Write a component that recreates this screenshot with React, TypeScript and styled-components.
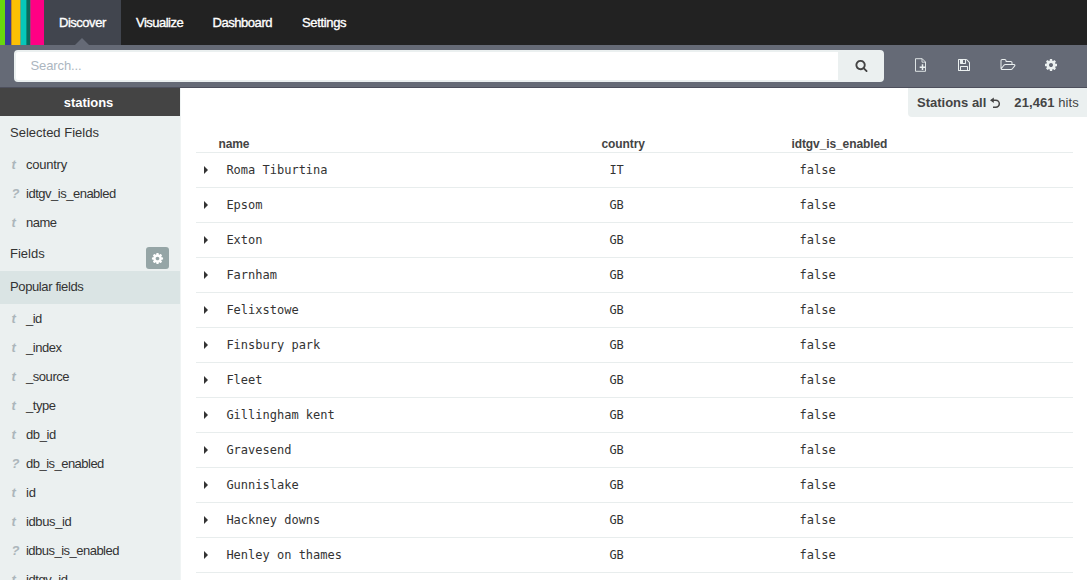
import React from "react";
import styled, { createGlobalStyle } from "styled-components";

const Global = createGlobalStyle`
  * { box-sizing: border-box; }
  html, body { margin: 0; height: 100%; overflow: hidden; }
  body { font-family: "Liberation Sans", Arial, sans-serif; font-size: 13px; color: #333; background: #fff; }
`;

const Page = styled.div`
  height: 580px;
  display: flex;
  flex-direction: column;
  overflow: hidden;
`;

const Navbar = styled.nav`
  height: 45px;
  flex: none;
  display: flex;
  background: #222;
`;

const Logo = styled.div`
  width: 44px;
  display: flex;
`;

const Stripe = styled.span<{ $w: number; $c: string }>`
  width: ${(p) => p.$w}px;
  background: ${(p) => p.$c};
`;

const Tab = styled.a<{ $active?: boolean; $w: number; $track: number }>`
  position: relative;
  width: ${(p) => p.$w}px;
  padding-left: 15px;
  line-height: 45px;
  font-size: 13px;
  white-space: nowrap;
  letter-spacing: ${(p) => p.$track}px;
  color: #fff;
  -webkit-text-stroke: 0.35px #fff;
  background: ${(p) => (p.$active ? "#41454e" : "transparent")};
  ${(p) =>
    p.$active &&
    `&::after {
      content: "";
      position: absolute;
      bottom: 0;
      left: 31px;
      border: 7px solid transparent;
      border-top: 0;
      border-bottom-color: #656a76;
    }`}
`;

const Toolbar = styled.div`
  height: 43px;
  flex: none;
  display: flex;
  align-items: flex-start;
  padding: 5px 0 0 14px;
  background: #656a76;
  border-bottom: 1px solid #4d4f5c;
`;

const SearchBox = styled.div`
  display: flex;
  width: 870px;
  height: 32px;
  border: 2px solid #ebf0f0;
  border-radius: 4px;
  background: #fff;
  overflow: hidden;
`;

const Placeholder = styled.span`
  flex: 1;
  padding-left: 14.5px;
  line-height: 28px;
  font-size: 13px;
  letter-spacing: -0.1px;
  color: #acb6c0;
`;

const SearchButton = styled.span`
  width: 44px;
  padding: 0 0 2px 3px;
  display: flex;
  align-items: center;
  justify-content: center;
  background: #ebf0f0;
  color: #444;
`;

const Actions = styled.div`
  display: flex;
  align-items: center;
  height: 29px;
  padding-left: 15px;
  color: #ebf0f0;
`;

const Action = styled.span`
  width: 43.5px;
  display: flex;
  justify-content: center;
`;

const Body = styled.div`
  flex: 1;
  display: flex;
  min-height: 0;
`;

const Sidebar = styled.aside`
  width: 181px;
  flex: none;
  background: #ebf0f0;
  border-right: 1px solid #f0f4f4;
  overflow: hidden;
`;

const IndexName = styled.div`
  height: 28px;
  line-height: 29px;
  padding-right: 3px;
  text-align: center;
  font-weight: bold;
  font-size: 13px;
  letter-spacing: -0.05px;
  color: #fff;
  background: #444;
`;

const Heading = styled.div<{ $h: number; $lh: number; $shade?: boolean; $track?: number }>`
  height: ${(p) => p.$h}px;
  line-height: ${(p) => p.$lh}px;
  padding: 0 11px 0 10px;
  display: flex;
  justify-content: space-between;
  font-size: 13px;
  letter-spacing: ${(p) => p.$track ?? 0}px;
  background: ${(p) => (p.$shade ? "#dae4e4" : "transparent")};
`;

const GearButton = styled.span`
  width: 23px;
  height: 22px;
  margin-top: 10px;
  display: flex;
  align-items: center;
  justify-content: center;
  border-radius: 3px;
  background: #95a5a6;
  color: #fff;
`;

const Field = styled.div<{ $track: number }>`
  display: flex;
  height: 29px;
  line-height: 29px;
  font-size: 13px;
  white-space: nowrap;
  letter-spacing: ${(p) => p.$track}px;
`;

const FieldType = styled.span`
  flex: none;
  width: 26px;
  padding-left: 11.5px;
  font-weight: bold;
  font-style: italic;
  font-size: 13px;
  color: #acb6bb;
`;

const Main = styled.main`
  flex: 1;
  display: flex;
  flex-direction: column;
  padding-left: 15px;
`;

const HitBadge = styled.div`
  align-self: flex-end;
  display: flex;
  align-items: center;
  width: 179px;
  height: 29px;
  flex: none;
  padding-left: 9px;
  white-space: nowrap;
  background: #ebf0f0;
  border-bottom-left-radius: 4px;
  color: #444;
  svg { margin: 1px 13px 0 3px; }
`;

const Count = styled.span`
  letter-spacing: 0.08px;
`;

const Row = styled.div`
  display: grid;
  grid-template-columns: 30.4px 383px 190.2px 1fr;
  flex: none;
  height: 35px;
  width: 877px;
  align-items: center;
  border-bottom: 1px solid #e8eded;
  font: 12px/34px "DejaVu Sans Mono", monospace;
`;

const HeadRow = styled(Row)`
  grid-template-columns: 22.5px 383px 190px 1fr;
  height: 36px;
  align-items: end;
  font: bold 12px/16px "Liberation Sans", sans-serif;
  letter-spacing: -0.1px;
  color: #444;
`;

const Caret = styled.i`
  margin-left: 7.5px;
  width: 0;
  height: 0;
  border: 4px solid transparent;
  border-left-color: #333;
  border-right: 0;
`;

const ICONS = {
  search:
    "M1216 832q0-185-131.5-316.5t-316.5-131.5-316.5 131.5-131.5 316.5 131.5 316.5 316.5 131.5 316.5-131.5 131.5-316.5zm512 832q0 52-38 90t-90 38q-54 0-90-38l-343-342q-179 124-399 124-143 0-273.5-55.5t-225-150-150-225-55.5-273.5 55.5-273.5 150-225 225-150 273.5-55.5 273.5 55.5 225 150 150 225 55.5 273.5q0 220-124 399l343 343q37 37 37 90z",
  save:
    "M512 1536h768v-384h-768v384zm896 0h128v-896q0-14-10-38.5t-20-34.5l-281-281q-10-10-34-20t-39-10v416q0 40-28 68t-68 28h-576q-40 0-68-28t-28-68v-416h-128v1280h128v-416q0-40 28-68t68-28h832q40 0 68 28t28 68v416zm-384-928v-320q0-13-9.5-22.5t-22.5-9.5h-192q-13 0-22.5 9.5t-9.5 22.5v320q0 13 9.5 22.5t22.5 9.5h192q13 0 22.5-9.5t9.5-22.5zm640 32v928q0 40-28 68t-68 28h-1344q-40 0-68-28t-28-68v-1344q0-40 28-68t68-28h928q40 0 88 20t76 48l280 280q28 28 48 76t20 88z",
  open:
    "M1845 931q0-35-53-35h-1088q-40 0-85.5 21.5t-71.5 52.5l-294 363q-18 24-18 40 0 35 53 35h1088q40 0 86-22t71-53l294-363q18-22 18-39zm-1141-163h768v-160q0-40-28-68t-68-28h-576q-40 0-68-28t-28-68v-64q0-40-28-68t-68-28h-320q-40 0-68 28t-28 68v853l256-315q44-53 116-87.5t140-34.5zm1269 163q0 62-46 120l-295 363q-43 53-116 87.5t-140 34.5h-1088q-92 0-158-66t-66-158v-960q0-92 66-158t158-66h320q92 0 158 66t66 158v32h544q92 0 158 66t66 158v160h192q54 0 99 24.5t67 70.5q15 32 15 68z",
  gear:
    "M1152 896q0-106-75-181t-181-75-181 75-75 181 75 181 181 75 181-75 75-181zm512-109v222q0 12-8 23t-20 13l-185 28q-19 54-39 91 35 50 107 138 10 12 10 25t-9 23q-27 37-99 108t-94 71q-12 0-26-9l-138-108q-44 23-91 38-16 136-29 186-7 28-36 28h-222q-14 0-24.5-8.5t-11.5-21.5l-28-184q-49-16-90-37l-141 107q-10 9-25 9-14 0-25-11-126-114-165-168-7-10-7-23 0-12 8-23 15-21 51-66.5t54-70.5q-27-50-41-99l-183-27q-13-2-21-12.5t-8-23.5v-222q0-12 8-23t19-13l186-28q14-46 39-92-40-57-107-138-10-12-10-24 0-10 9-23 26-36 98.5-107.5t94.5-71.5q13 0 26 10l138 107q44-23 91-38 16-136 29-186 7-28 36-28h222q14 0 24.5 8.5t11.5 21.5l28 184q49 16 90 37l142-107q9-9 24-9 13 0 25 10 129 119 165 170 7 8 7 22 0 12-8 23-15 21-51 66.5t-54 70.5q26 50 41 98l183 28q13 2 21 12.5t8 23.5z",
};

const Icon = ({ name, size = 14, wide = 1792 }: { name: keyof typeof ICONS; size?: number; wide?: number }) => (
  <svg width={(size * wide) / 1792} height={size} viewBox={`0 0 ${wide} 1792`} fill="currentColor">
    <path d={ICONS[name]} />
  </svg>
);

const UndoIcon = () => (
  <svg width="12" height="12" viewBox="0 0 12 12" fill="none" stroke="currentColor" strokeWidth="1.5">
    <path d="M2.5 3.2H6.8A3.5 3.5 0 0 1 6.8 10.2H4" />
    <path d="M1 3.2L4.8 .4V6Z" fill="currentColor" stroke="none" />
  </svg>
);

const NewFileIcon = () => (
  <svg width="13" height="14" viewBox="0 0 13 14" fill="none" stroke="currentColor">
    <path d="M6 13.3H1.5V.7H8.2L11.5 4V13.3H6" strokeWidth="0.9" />
    <path d="M8 .7V4.2H11.5" strokeWidth="0.8" />
    <path d="M8.5 6.3V12M5.7 9.2H11.3" strokeWidth="1.5" />
  </svg>
);

const stripes: [number, string][] = [
  [5, "#69d70f"], [6, "#353d98"], [1, "#c78b22"], [8, "#fbc005"], [1, "#7da66a"],
  [5, "#06c7ba"], [1, "#06917f"], [3, "#0a6a5c"], [1, "#a63b78"], [13, "#ff0084"],
];
const tabs: [string, number, number][] = [
  ["Discover", 77, -0.48], ["Visualize", 76.5, -0.52], ["Dashboard", 89.5, -0.45], ["Settings", 74, -0.35],
];

type FieldInfo = [type: string, label: string, track: number];
const selected: FieldInfo[] = [["t", "country", -0.25], ["?", "idtgv_is_enabled", -0.49], ["t", "name", -0.5]];
const popular: FieldInfo[] = [
  ["t", "_id", -0.5], ["t", "_index", -0.45], ["t", "_source", -0.45], ["t", "_type", -0.45], ["t", "db_id", -0.4],
  ["?", "db_is_enabled", -0.52], ["t", "id", -0.1], ["t", "idbus_id", -0.38], ["?", "idbus_is_enabled", -0.52],
  ["t", "idtgv_id", -0.4],
];
const stations = [
  "Roma Tiburtina", "Epsom", "Exton", "Farnham", "Felixstowe", "Finsbury park", "Fleet",
  "Gillingham kent", "Gravesend", "Gunnislake", "Hackney downs", "Henley on thames",
];

const FieldList = ({ items }: { items: FieldInfo[] }) => (
  <>
    {items.map(([type, label, track]) => (
      <Field key={label} $track={track}>
        <FieldType>{type}</FieldType>
        {label}
      </Field>
    ))}
  </>
);

export default function App() {
  return (
    <Page>
      <Global />
      <Navbar>
        <Logo>{stripes.map(([w, c]) => <Stripe key={c} $w={w} $c={c} />)}</Logo>
        {tabs.map(([label, w, track], i) => (
          <Tab key={label} $w={w} $track={track} $active={i === 0}>{label}</Tab>
        ))}
      </Navbar>
      <Toolbar>
        <SearchBox>
          <Placeholder>Search...</Placeholder>
          <SearchButton><Icon name="search" size={13} /></SearchButton>
        </SearchBox>
        <Actions>
          <Action><NewFileIcon /></Action>
          <Action><Icon name="save" /></Action>
          <Action><Icon name="open" wide={2048} /></Action>
          <Action><Icon name="gear" /></Action>
        </Actions>
      </Toolbar>
      <Body>
        <Sidebar>
          <IndexName>stations</IndexName>
          <Heading $h={34} $lh={34}>Selected Fields</Heading>
          <FieldList items={selected} />
          <Heading $h={34} $lh={33}>
            Fields
            <GearButton><Icon name="gear" size={13} /></GearButton>
          </Heading>
          <Heading $h={33} $lh={32} $shade $track={-0.38}>Popular fields</Heading>
          <FieldList items={popular} />
        </Sidebar>
        <Main>
          <HitBadge>
            <b>Stations all</b>
            <UndoIcon />
            <Count><b>21,461</b> hits</Count>
          </HitBadge>
          <HeadRow><span /><span>name</span><span>country</span><span>idtgv_is_enabled</span></HeadRow>
          {stations.map((name, i) => (
            <Row key={name}>
              <Caret />
              <span>{name}</span>
              <span>{i === 0 ? "IT" : "GB"}</span>
              <span>false</span>
            </Row>
          ))}
        </Main>
      </Body>
    </Page>
  );
}
